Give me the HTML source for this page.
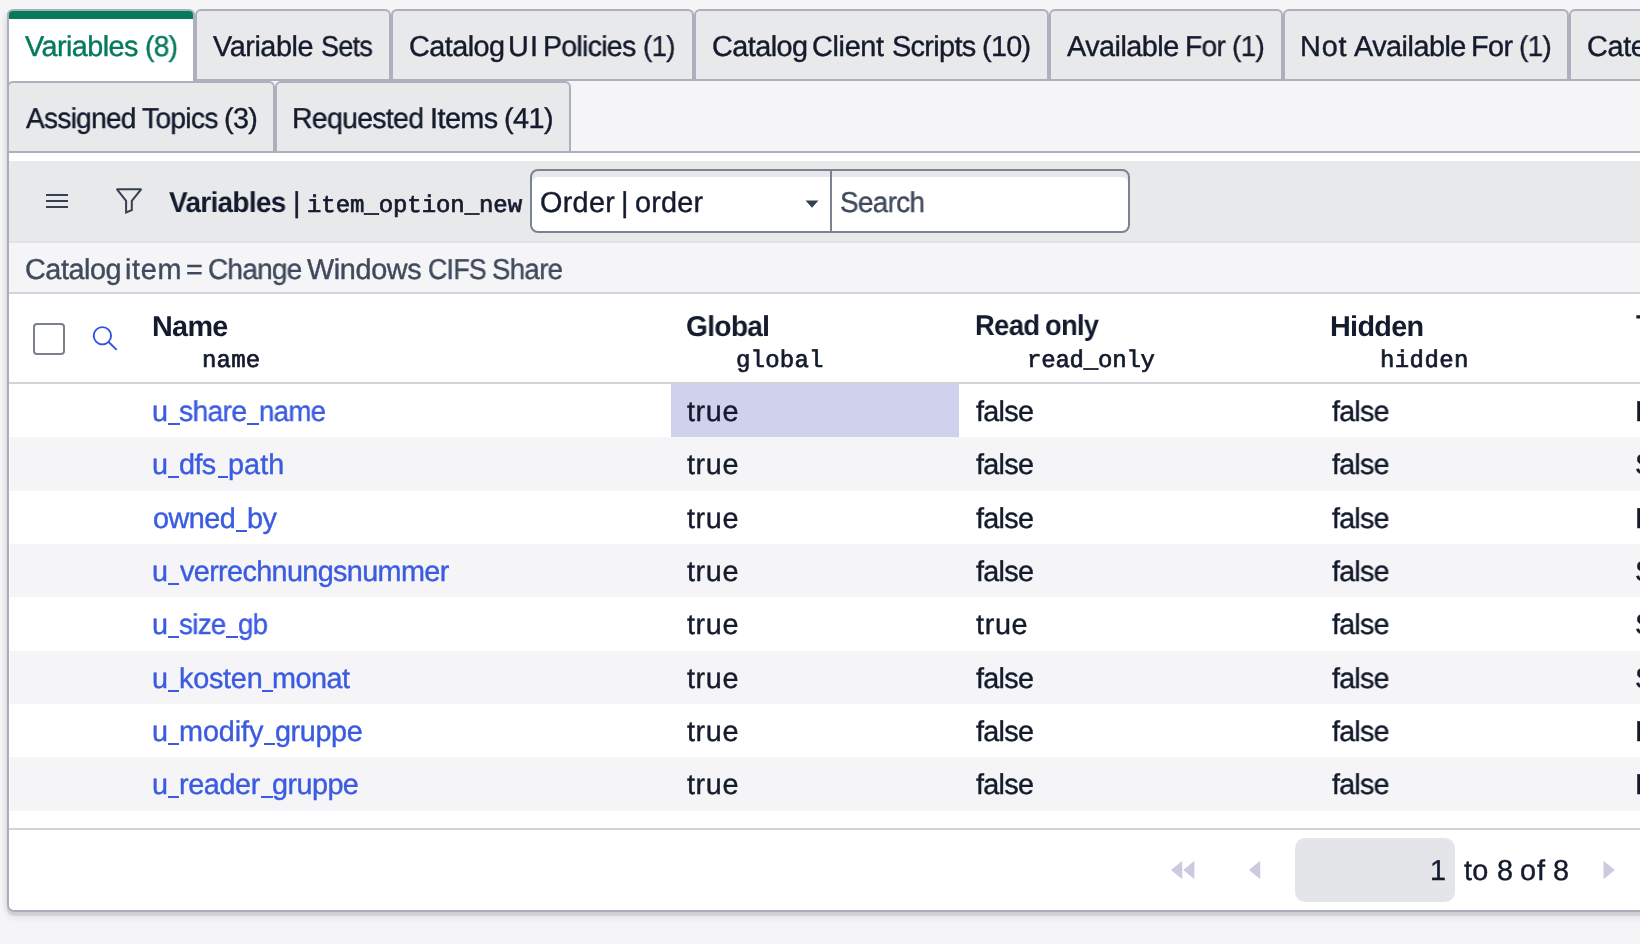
<!DOCTYPE html>
<html><head><meta charset="utf-8"><title>Variables</title>
<style>
html,body{margin:0;padding:0}
body{width:1640px;height:944px;overflow:hidden;position:relative;background:#f5f5f7;font-family:"Liberation Sans",sans-serif}
.t{position:absolute;white-space:nowrap;display:block;will-change:transform;transform-origin:0 0;text-rendering:geometricPrecision}
.abs,.tab,.alt{position:absolute;box-sizing:border-box}
.tab{height:72px;border:2px solid #acb0bd;border-radius:6px 6px 0 0;background:#e8e9eb}
.tab.act{background:linear-gradient(#067a5b 8px,#fff 8px);border-bottom:0}
.alt{left:10px;width:1640px;background:#f5f5f7}
</style></head><body>
<!-- outer frame with shadow -->
<div class="abs" style="left:7px;top:13px;width:1700px;height:899px;border-left:2px solid #a9adb9;border-bottom:2px solid #a9adb9;border-bottom-left-radius:7px;box-shadow:0 4px 0 rgba(40,45,70,.085),0 5px 7px rgba(40,45,70,.10),-2px 0 5px rgba(30,32,45,.065)"></div>
<!-- list white background -->
<div class="abs" style="left:9px;top:153px;width:1640px;height:757px;background:#fff;border-bottom-left-radius:5px"></div>
<!-- tab strip lines -->
<div class="abs" style="left:9px;top:79px;width:1640px;height:2px;background:#acb0bd"></div>
<div class="tab act" style="left:7px;top:9px;width:188px"></div><div class="tab" style="left:195px;top:9px;width:196px"></div><div class="tab" style="left:391px;top:9px;width:303px"></div><div class="tab" style="left:694px;top:9px;width:355px"></div><div class="tab" style="left:1049px;top:9px;width:234px"></div><div class="tab" style="left:1283px;top:9px;width:286px"></div><div class="tab" style="left:1569px;top:9px;width:231px"></div><div class="tab" style="left:7px;top:81px;width:268px"></div><div class="tab" style="left:275px;top:81px;width:296px"></div>
<div class="abs" style="left:9px;top:151px;width:1640px;height:2px;background:#acb0bd"></div>
<!-- toolbar -->
<div class="abs" style="left:9px;top:161px;width:1640px;height:82px;background:#e8e9eb"></div>
<div class="abs" style="left:46px;top:194px;width:22px;height:2px;background:#364052"></div><div class="abs" style="left:46px;top:200px;width:22px;height:2px;background:#364052"></div><div class="abs" style="left:46px;top:206px;width:22px;height:2px;background:#364052"></div>
<svg class="abs" style="left:110px;top:182px" width="40" height="40" viewBox="110 182 40 40"><path d="M116.8 189.15H141.3L131.8 200.9V210.1L126.1 212.5V200.9Z" stroke="#364052" stroke-width="2" fill="none" stroke-linejoin="miter" stroke-miterlimit="2"/></svg>
<!-- select + search -->
<div class="abs" style="left:530px;top:169px;width:302px;height:64px;border:2px solid #7b8290;border-radius:8px 0 0 8px;background:#fff;box-shadow:inset 0 6px 0 #e6e7ea"></div>
<div class="abs" style="left:830px;top:169px;width:300px;height:64px;border:2px solid #7b8290;border-radius:0 8px 8px 0;background:#fff;box-shadow:inset 0 6px 0 #e6e7ea"></div>
<svg class="abs" style="left:805px;top:200px" width="14" height="8" viewBox="0 0 14 8"><path d="M0.5 0.5H13.5L7 7.8Z" fill="#364052"/></svg>
<!-- breadcrumb -->
<div class="abs" style="left:9px;top:241px;width:1640px;height:2px;background:#e2e3e6"></div>
<div class="abs" style="left:9px;top:243px;width:1640px;height:49px;background:#f5f5f7"></div>
<div class="abs" style="left:9px;top:292px;width:1640px;height:2px;background:#d2d3da"></div>
<!-- header -->
<div class="abs" style="left:33px;top:323px;width:32px;height:32px;border:2px solid #7a808d;border-radius:4px;background:#fff"></div>
<svg class="abs" style="left:88px;top:322px" width="34" height="34" viewBox="88 322 34 34"><g stroke="#3352e4" stroke-width="1.9" fill="none"><circle cx="102.4" cy="335.75" r="8.65"/><path d="M108.6 342L116.7 349.9"/></g></svg>
<div class="abs" style="left:9px;top:382px;width:1640px;height:2px;background:#d2d3da"></div>
<!-- rows -->
<div class="alt" style="top:437px;height:54px"></div><div class="alt" style="top:544px;height:53px"></div><div class="alt" style="top:651px;height:53px"></div><div class="alt" style="top:757px;height:54px"></div>
<div class="abs" style="left:671px;top:384px;width:288px;height:53px;background:#d0d1ec"></div>
<!-- footer -->
<div class="abs" style="left:9px;top:828px;width:1640px;height:2px;background:#d2d3da"></div>
<div class="abs" style="left:1295px;top:838px;width:160px;height:64px;border-radius:10px;background:#e4e5e8"></div>
<svg class="abs" style="left:1168px;top:858px" width="30" height="24" viewBox="1168 858 30 24"><path d="M1182.3 860.7V879.2L1171 869.95ZM1194.4 860.7V879.2L1183.3 869.95Z" fill="#cbcbdf"/></svg>
<svg class="abs" style="left:1246px;top:858px" width="18" height="24" viewBox="1246 858 18 24"><path d="M1260.2 860.7V879.2L1248.9 869.95Z" fill="#cbcbdf"/></svg>
<svg class="abs" style="left:1600px;top:858px" width="18" height="24" viewBox="1600 858 18 24"><path d="M1603.5 860.7V879.2L1614.8 869.95Z" fill="#cbcbdf"/></svg>
<!-- texts -->
<span class="t" style="left:25.1px;top:33.0px;font:400 28.8px/1 'Liberation Sans',sans-serif;letter-spacing:-0.575px;-webkit-text-stroke:0.4px;color:#067a5b">Variables</span>
<span class="t" style="left:144.9px;top:33.0px;transform:scaleX(0.9742);font:400 28.8px/1 'Liberation Sans',sans-serif;letter-spacing:-0.700px;-webkit-text-stroke:0.4px;color:#067a5b">(8)</span>
<span class="t" style="left:213.4px;top:33.0px;font:400 28.8px/1 'Liberation Sans',sans-serif;letter-spacing:-0.429px;-webkit-text-stroke:0.4px;color:#141b2d">Variable</span>
<span class="t" style="left:320.6px;top:33.0px;transform:scaleX(0.9352);font:400 28.8px/1 'Liberation Sans',sans-serif;letter-spacing:-0.700px;-webkit-text-stroke:0.4px;color:#141b2d">Sets</span>
<span class="t" style="left:408.5px;top:33.0px;font:400 28.8px/1 'Liberation Sans',sans-serif;letter-spacing:-0.533px;-webkit-text-stroke:0.4px;color:#141b2d">Catalog</span>
<span class="t" style="left:508.2px;top:33.0px;font:400 28.8px/1 'Liberation Sans',sans-serif;letter-spacing:1.200px;-webkit-text-stroke:0.4px;color:#141b2d">UI</span>
<span class="t" style="left:543.4px;top:33.0px;transform:scaleX(0.9880);font:400 28.8px/1 'Liberation Sans',sans-serif;letter-spacing:-0.700px;-webkit-text-stroke:0.4px;color:#141b2d">Policies</span>
<span class="t" style="left:643.4px;top:33.0px;transform:scaleX(0.9581);font:400 28.8px/1 'Liberation Sans',sans-serif;letter-spacing:-0.700px;-webkit-text-stroke:0.4px;color:#141b2d">(1)</span>
<span class="t" style="left:711.7px;top:33.0px;font:400 28.8px/1 'Liberation Sans',sans-serif;letter-spacing:-0.533px;-webkit-text-stroke:0.4px;color:#141b2d">Catalog</span>
<span class="t" style="left:812.4px;top:33.0px;font:400 28.8px/1 'Liberation Sans',sans-serif;letter-spacing:-0.320px;-webkit-text-stroke:0.4px;color:#141b2d">Client</span>
<span class="t" style="left:891.7px;top:33.0px;transform:scaleX(1.0049);font:400 28.8px/1 'Liberation Sans',sans-serif;letter-spacing:-0.700px;-webkit-text-stroke:0.4px;color:#141b2d">Scripts</span>
<span class="t" style="left:981.9px;top:33.0px;transform:scaleX(0.9979);font:400 28.8px/1 'Liberation Sans',sans-serif;letter-spacing:-0.700px;-webkit-text-stroke:0.4px;color:#141b2d">(10)</span>
<span class="t" style="left:1067.1px;top:33.0px;font:400 28.8px/1 'Liberation Sans',sans-serif;letter-spacing:-0.525px;-webkit-text-stroke:0.4px;color:#141b2d">Available</span>
<span class="t" style="left:1184.6px;top:33.0px;transform:scaleX(0.9750);font:400 28.8px/1 'Liberation Sans',sans-serif;letter-spacing:-0.700px;-webkit-text-stroke:0.4px;color:#141b2d">For</span>
<span class="t" style="left:1232.4px;top:33.0px;transform:scaleX(0.9677);font:400 28.8px/1 'Liberation Sans',sans-serif;letter-spacing:-0.700px;-webkit-text-stroke:0.4px;color:#141b2d">(1)</span>
<span class="t" style="left:1300.2px;top:33.0px;font:400 28.8px/1 'Liberation Sans',sans-serif;letter-spacing:0.900px;-webkit-text-stroke:0.4px;color:#141b2d">Not</span>
<span class="t" style="left:1354.0px;top:33.0px;font:400 28.8px/1 'Liberation Sans',sans-serif;letter-spacing:-0.500px;-webkit-text-stroke:0.4px;color:#141b2d">Available</span>
<span class="t" style="left:1470.5px;top:33.0px;font:400 28.8px/1 'Liberation Sans',sans-serif;letter-spacing:-0.500px;-webkit-text-stroke:0.4px;color:#141b2d">For</span>
<span class="t" style="left:1519.0px;top:33.0px;transform:scaleX(0.9645);font:400 28.8px/1 'Liberation Sans',sans-serif;letter-spacing:-0.700px;-webkit-text-stroke:0.4px;color:#141b2d">(1)</span>
<span class="t" style="left:1587.3px;top:33.0px;font:400 28.8px/1 'Liberation Sans',sans-serif;letter-spacing:-0.333px;-webkit-text-stroke:0.4px;color:#141b2d">Categories</span>
<span class="t" style="left:25.5px;top:105.0px;transform:scaleX(0.9723);font:400 28.8px/1 'Liberation Sans',sans-serif;letter-spacing:-0.700px;-webkit-text-stroke:0.4px;color:#141b2d">Assigned</span>
<span class="t" style="left:141.5px;top:105.0px;transform:scaleX(0.9779);font:400 28.8px/1 'Liberation Sans',sans-serif;letter-spacing:-0.700px;-webkit-text-stroke:0.4px;color:#141b2d">Topics</span>
<span class="t" style="left:223.6px;top:105.0px;transform:scaleX(0.9903);font:400 28.8px/1 'Liberation Sans',sans-serif;letter-spacing:-0.700px;-webkit-text-stroke:0.4px;color:#141b2d">(3)</span>
<span class="t" style="left:292.2px;top:105.0px;transform:scaleX(0.9877);font:400 28.8px/1 'Liberation Sans',sans-serif;letter-spacing:-0.700px;-webkit-text-stroke:0.4px;color:#141b2d">Requested</span>
<span class="t" style="left:429.5px;top:105.0px;font:400 28.8px/1 'Liberation Sans',sans-serif;letter-spacing:-0.550px;-webkit-text-stroke:0.4px;color:#141b2d">Items</span>
<span class="t" style="left:504.0px;top:105.0px;font:400 28.8px/1 'Liberation Sans',sans-serif;letter-spacing:-0.533px;-webkit-text-stroke:0.4px;color:#141b2d">(41)</span>
<span class="t" style="left:169.1px;top:188.6px;transform:scaleX(0.9708);font:700 28.8px/1 'Liberation Sans',sans-serif;letter-spacing:-0.700px;color:#141b2d">Variables</span>
<span class="t" style="left:292.5px;top:188.6px;font:400 28.8px/1 'Liberation Sans',sans-serif;letter-spacing:0.000px;-webkit-text-stroke:0.4px;color:#141b2d">|</span>
<span class="t" style="left:307.0px;top:194.6px;font:400 24px/1 'Liberation Mono',monospace;letter-spacing:-0.071px;-webkit-text-stroke:0.7px;color:#141b2d">item_option_new</span>
<span class="t" style="left:539.7px;top:188.8px;font:400 28.8px/1 'Liberation Sans',sans-serif;letter-spacing:0.300px;-webkit-text-stroke:0.4px;color:#141b2d">Order</span>
<span class="t" style="left:621.2px;top:188.8px;font:400 28.8px/1 'Liberation Sans',sans-serif;letter-spacing:0.000px;-webkit-text-stroke:0.4px;color:#141b2d">|</span>
<span class="t" style="left:634.5px;top:188.8px;font:400 28.8px/1 'Liberation Sans',sans-serif;letter-spacing:0.200px;-webkit-text-stroke:0.4px;color:#141b2d">order</span>
<span class="t" style="left:839.7px;top:189.0px;transform:scaleX(0.9682);font:400 28.8px/1 'Liberation Sans',sans-serif;letter-spacing:-0.700px;-webkit-text-stroke:0.4px;color:#3f4a5c">Search</span>
<span class="t" style="left:25.1px;top:255.8px;font:400 28.8px/1 'Liberation Sans',sans-serif;letter-spacing:-0.467px;-webkit-text-stroke:0.4px;color:#3f4a5c">Catalog</span>
<span class="t" style="left:125.1px;top:255.8px;font:400 28.8px/1 'Liberation Sans',sans-serif;letter-spacing:0.667px;-webkit-text-stroke:0.4px;color:#3f4a5c">item</span>
<span class="t" style="left:186.4px;top:255.8px;font:400 28.8px/1 'Liberation Sans',sans-serif;letter-spacing:0.000px;-webkit-text-stroke:0.4px;color:#3f4a5c">=</span>
<span class="t" style="left:207.8px;top:255.8px;transform:scaleX(0.9684);font:400 28.8px/1 'Liberation Sans',sans-serif;letter-spacing:-0.700px;-webkit-text-stroke:0.4px;color:#3f4a5c">Change</span>
<span class="t" style="left:307.4px;top:255.8px;font:400 28.8px/1 'Liberation Sans',sans-serif;letter-spacing:-0.367px;-webkit-text-stroke:0.4px;color:#3f4a5c">Windows</span>
<span class="t" style="left:428.1px;top:255.8px;transform:scaleX(0.9246);font:400 28.8px/1 'Liberation Sans',sans-serif;letter-spacing:-0.700px;-webkit-text-stroke:0.4px;color:#3f4a5c">CIFS</span>
<span class="t" style="left:492.0px;top:255.8px;transform:scaleX(0.9583);font:400 28.8px/1 'Liberation Sans',sans-serif;letter-spacing:-0.700px;-webkit-text-stroke:0.4px;color:#3f4a5c">Share</span>
<span class="t" style="left:152.4px;top:312.6px;transform:scaleX(0.9945);font:700 28.8px/1 'Liberation Sans',sans-serif;letter-spacing:-0.700px;color:#141b2d">Name</span>
<span class="t" style="left:202.2px;top:349.9px;font:400 24px/1 'Liberation Mono',monospace;letter-spacing:0.200px;-webkit-text-stroke:0.7px;color:#141b2d">name</span>
<span class="t" style="left:686.0px;top:312.6px;transform:scaleX(0.9759);font:700 28.8px/1 'Liberation Sans',sans-serif;letter-spacing:-0.700px;color:#141b2d">Global</span>
<span class="t" style="left:736.0px;top:349.9px;font:400 24px/1 'Liberation Mono',monospace;letter-spacing:0.200px;-webkit-text-stroke:0.7px;color:#141b2d">global</span>
<span class="t" style="left:1330.0px;top:312.6px;font:700 28.8px/1 'Liberation Sans',sans-serif;letter-spacing:-0.700px;color:#141b2d">Hidden</span>
<span class="t" style="left:1380.0px;top:349.9px;font:400 24px/1 'Liberation Mono',monospace;letter-spacing:0.400px;-webkit-text-stroke:0.7px;color:#141b2d">hidden</span>
<span class="t" style="left:974.9px;top:312.4px;transform:scaleX(0.9516);font:700 28.8px/1 'Liberation Sans',sans-serif;letter-spacing:-0.700px;color:#141b2d">Read</span>
<span class="t" style="left:1044.7px;top:312.4px;transform:scaleX(0.9464);font:700 28.8px/1 'Liberation Sans',sans-serif;letter-spacing:-0.700px;color:#141b2d">only</span>
<span class="t" style="left:1026.6px;top:349.5px;font:400 24px/1 'Liberation Mono',monospace;letter-spacing:-0.200px;-webkit-text-stroke:0.7px;color:#141b2d">read_only</span>
<span class="t" style="left:1636.0px;top:312.4px;transform:scaleX(0.9355);font:700 28.8px/1 'Liberation Sans',sans-serif;letter-spacing:-0.700px;color:#141b2d">Type</span>
<span class="t" style="left:151.9px;top:398.0px;font:400 28.8px/1 'Liberation Sans',sans-serif;letter-spacing:0.000px;-webkit-text-stroke:0.4px;color:#3b5be0">u</span>
<span class="t" style="left:179.2px;top:398.0px;transform:scaleX(0.9836);font:400 28.8px/1 'Liberation Sans',sans-serif;letter-spacing:-0.700px;-webkit-text-stroke:0.4px;color:#3b5be0">share</span>
<span class="t" style="left:258.8px;top:398.0px;transform:scaleX(0.9567);font:400 28.8px/1 'Liberation Sans',sans-serif;letter-spacing:-0.700px;-webkit-text-stroke:0.4px;color:#3b5be0">name</span>
<span class="t" style="left:687.2px;top:398.0px;font:400 28.8px/1 'Liberation Sans',sans-serif;letter-spacing:0.600px;-webkit-text-stroke:0.4px;color:#141b2d">true</span>
<span class="t" style="left:976.0px;top:398.0px;font:400 28.8px/1 'Liberation Sans',sans-serif;letter-spacing:-0.700px;-webkit-text-stroke:0.4px;color:#141b2d">false</span>
<span class="t" style="left:1332.0px;top:398.0px;transform:scaleX(0.9912);font:400 28.8px/1 'Liberation Sans',sans-serif;letter-spacing:-0.700px;-webkit-text-stroke:0.4px;color:#141b2d">false</span>
<span class="t" style="left:1635.0px;top:398.0px;font:400 28.8px/1 'Liberation Sans',sans-serif;letter-spacing:-0.800px;-webkit-text-stroke:0.4px;color:#141b2d">Reference</span>
<span class="t" style="left:151.9px;top:451.3px;font:400 28.8px/1 'Liberation Sans',sans-serif;letter-spacing:0.000px;-webkit-text-stroke:0.4px;color:#3b5be0">u</span>
<span class="t" style="left:179.2px;top:451.3px;font:400 28.8px/1 'Liberation Sans',sans-serif;letter-spacing:-0.600px;-webkit-text-stroke:0.4px;color:#3b5be0">dfs</span>
<span class="t" style="left:227.9px;top:451.3px;font:400 28.8px/1 'Liberation Sans',sans-serif;letter-spacing:0.067px;-webkit-text-stroke:0.4px;color:#3b5be0">path</span>
<span class="t" style="left:687.2px;top:451.3px;font:400 28.8px/1 'Liberation Sans',sans-serif;letter-spacing:0.600px;-webkit-text-stroke:0.4px;color:#141b2d">true</span>
<span class="t" style="left:976.0px;top:451.3px;font:400 28.8px/1 'Liberation Sans',sans-serif;letter-spacing:-0.700px;-webkit-text-stroke:0.4px;color:#141b2d">false</span>
<span class="t" style="left:1332.0px;top:451.3px;transform:scaleX(0.9912);font:400 28.8px/1 'Liberation Sans',sans-serif;letter-spacing:-0.700px;-webkit-text-stroke:0.4px;color:#141b2d">false</span>
<span class="t" style="left:1634.5px;top:451.3px;font:400 28.8px/1 'Liberation Sans',sans-serif;letter-spacing:-0.800px;-webkit-text-stroke:0.4px;color:#141b2d">Single Line Text</span>
<span class="t" style="left:152.7px;top:504.7px;font:400 28.8px/1 'Liberation Sans',sans-serif;letter-spacing:-0.500px;-webkit-text-stroke:0.4px;color:#3b5be0">owned</span>
<span class="t" style="left:246.7px;top:504.7px;font:400 28.8px/1 'Liberation Sans',sans-serif;letter-spacing:-0.600px;-webkit-text-stroke:0.4px;color:#3b5be0">by</span>
<span class="t" style="left:687.2px;top:504.7px;font:400 28.8px/1 'Liberation Sans',sans-serif;letter-spacing:0.600px;-webkit-text-stroke:0.4px;color:#141b2d">true</span>
<span class="t" style="left:976.0px;top:504.7px;font:400 28.8px/1 'Liberation Sans',sans-serif;letter-spacing:-0.700px;-webkit-text-stroke:0.4px;color:#141b2d">false</span>
<span class="t" style="left:1332.0px;top:504.7px;transform:scaleX(0.9912);font:400 28.8px/1 'Liberation Sans',sans-serif;letter-spacing:-0.700px;-webkit-text-stroke:0.4px;color:#141b2d">false</span>
<span class="t" style="left:1635.0px;top:504.7px;font:400 28.8px/1 'Liberation Sans',sans-serif;letter-spacing:-0.800px;-webkit-text-stroke:0.4px;color:#141b2d">Reference</span>
<span class="t" style="left:151.9px;top:558.0px;font:400 28.8px/1 'Liberation Sans',sans-serif;letter-spacing:0.000px;-webkit-text-stroke:0.4px;color:#3b5be0">u</span>
<span class="t" style="left:180.2px;top:558.0px;font:400 28.8px/1 'Liberation Sans',sans-serif;letter-spacing:-0.635px;-webkit-text-stroke:0.4px;color:#3b5be0">verrechnungsnummer</span>
<span class="t" style="left:687.2px;top:558.0px;font:400 28.8px/1 'Liberation Sans',sans-serif;letter-spacing:0.600px;-webkit-text-stroke:0.4px;color:#141b2d">true</span>
<span class="t" style="left:976.0px;top:558.0px;font:400 28.8px/1 'Liberation Sans',sans-serif;letter-spacing:-0.700px;-webkit-text-stroke:0.4px;color:#141b2d">false</span>
<span class="t" style="left:1332.0px;top:558.0px;transform:scaleX(0.9912);font:400 28.8px/1 'Liberation Sans',sans-serif;letter-spacing:-0.700px;-webkit-text-stroke:0.4px;color:#141b2d">false</span>
<span class="t" style="left:1634.5px;top:558.0px;font:400 28.8px/1 'Liberation Sans',sans-serif;letter-spacing:-0.800px;-webkit-text-stroke:0.4px;color:#141b2d">Single Line Text</span>
<span class="t" style="left:151.9px;top:611.3px;font:400 28.8px/1 'Liberation Sans',sans-serif;letter-spacing:0.000px;-webkit-text-stroke:0.4px;color:#3b5be0">u</span>
<span class="t" style="left:179.2px;top:611.3px;transform:scaleX(0.9638);font:400 28.8px/1 'Liberation Sans',sans-serif;letter-spacing:-0.700px;-webkit-text-stroke:0.4px;color:#3b5be0">size</span>
<span class="t" style="left:238.0px;top:611.3px;transform:scaleX(0.9586);font:400 28.8px/1 'Liberation Sans',sans-serif;letter-spacing:-0.700px;-webkit-text-stroke:0.4px;color:#3b5be0">gb</span>
<span class="t" style="left:687.2px;top:611.3px;font:400 28.8px/1 'Liberation Sans',sans-serif;letter-spacing:0.600px;-webkit-text-stroke:0.4px;color:#141b2d">true</span>
<span class="t" style="left:976.0px;top:611.3px;font:400 28.8px/1 'Liberation Sans',sans-serif;letter-spacing:0.667px;-webkit-text-stroke:0.4px;color:#141b2d">true</span>
<span class="t" style="left:1332.0px;top:611.3px;transform:scaleX(0.9912);font:400 28.8px/1 'Liberation Sans',sans-serif;letter-spacing:-0.700px;-webkit-text-stroke:0.4px;color:#141b2d">false</span>
<span class="t" style="left:1634.5px;top:611.3px;font:400 28.8px/1 'Liberation Sans',sans-serif;letter-spacing:-0.800px;-webkit-text-stroke:0.4px;color:#141b2d">Single Line Text</span>
<span class="t" style="left:151.9px;top:664.7px;font:400 28.8px/1 'Liberation Sans',sans-serif;letter-spacing:0.000px;-webkit-text-stroke:0.4px;color:#3b5be0">u</span>
<span class="t" style="left:178.8px;top:664.7px;font:400 28.8px/1 'Liberation Sans',sans-serif;letter-spacing:-0.240px;-webkit-text-stroke:0.4px;color:#3b5be0">kosten</span>
<span class="t" style="left:272.4px;top:664.7px;font:400 28.8px/1 'Liberation Sans',sans-serif;letter-spacing:-0.500px;-webkit-text-stroke:0.4px;color:#3b5be0">monat</span>
<span class="t" style="left:687.2px;top:664.7px;font:400 28.8px/1 'Liberation Sans',sans-serif;letter-spacing:0.600px;-webkit-text-stroke:0.4px;color:#141b2d">true</span>
<span class="t" style="left:976.0px;top:664.7px;font:400 28.8px/1 'Liberation Sans',sans-serif;letter-spacing:-0.700px;-webkit-text-stroke:0.4px;color:#141b2d">false</span>
<span class="t" style="left:1332.0px;top:664.7px;transform:scaleX(0.9912);font:400 28.8px/1 'Liberation Sans',sans-serif;letter-spacing:-0.700px;-webkit-text-stroke:0.4px;color:#141b2d">false</span>
<span class="t" style="left:1634.5px;top:664.7px;font:400 28.8px/1 'Liberation Sans',sans-serif;letter-spacing:-0.800px;-webkit-text-stroke:0.4px;color:#141b2d">Single Line Text</span>
<span class="t" style="left:151.9px;top:718.0px;font:400 28.8px/1 'Liberation Sans',sans-serif;letter-spacing:0.000px;-webkit-text-stroke:0.4px;color:#3b5be0">u</span>
<span class="t" style="left:178.8px;top:718.0px;font:400 28.8px/1 'Liberation Sans',sans-serif;letter-spacing:-0.080px;-webkit-text-stroke:0.4px;color:#3b5be0">modify</span>
<span class="t" style="left:274.8px;top:718.0px;font:400 28.8px/1 'Liberation Sans',sans-serif;letter-spacing:-0.400px;-webkit-text-stroke:0.4px;color:#3b5be0">gruppe</span>
<span class="t" style="left:687.2px;top:718.0px;font:400 28.8px/1 'Liberation Sans',sans-serif;letter-spacing:0.600px;-webkit-text-stroke:0.4px;color:#141b2d">true</span>
<span class="t" style="left:976.0px;top:718.0px;font:400 28.8px/1 'Liberation Sans',sans-serif;letter-spacing:-0.700px;-webkit-text-stroke:0.4px;color:#141b2d">false</span>
<span class="t" style="left:1332.0px;top:718.0px;transform:scaleX(0.9912);font:400 28.8px/1 'Liberation Sans',sans-serif;letter-spacing:-0.700px;-webkit-text-stroke:0.4px;color:#141b2d">false</span>
<span class="t" style="left:1635.0px;top:718.0px;font:400 28.8px/1 'Liberation Sans',sans-serif;letter-spacing:-0.800px;-webkit-text-stroke:0.4px;color:#141b2d">Reference</span>
<span class="t" style="left:151.9px;top:771.3px;font:400 28.8px/1 'Liberation Sans',sans-serif;letter-spacing:0.000px;-webkit-text-stroke:0.4px;color:#3b5be0">u</span>
<span class="t" style="left:178.8px;top:771.3px;font:400 28.8px/1 'Liberation Sans',sans-serif;letter-spacing:-0.400px;-webkit-text-stroke:0.4px;color:#3b5be0">reader</span>
<span class="t" style="left:272.2px;top:771.3px;font:400 28.8px/1 'Liberation Sans',sans-serif;letter-spacing:-0.560px;-webkit-text-stroke:0.4px;color:#3b5be0">gruppe</span>
<span class="t" style="left:687.2px;top:771.3px;font:400 28.8px/1 'Liberation Sans',sans-serif;letter-spacing:0.600px;-webkit-text-stroke:0.4px;color:#141b2d">true</span>
<span class="t" style="left:976.0px;top:771.3px;font:400 28.8px/1 'Liberation Sans',sans-serif;letter-spacing:-0.700px;-webkit-text-stroke:0.4px;color:#141b2d">false</span>
<span class="t" style="left:1332.0px;top:771.3px;transform:scaleX(0.9912);font:400 28.8px/1 'Liberation Sans',sans-serif;letter-spacing:-0.700px;-webkit-text-stroke:0.4px;color:#141b2d">false</span>
<span class="t" style="left:1635.0px;top:771.3px;font:400 28.8px/1 'Liberation Sans',sans-serif;letter-spacing:-0.800px;-webkit-text-stroke:0.4px;color:#141b2d">Reference</span>
<span class="t" style="left:1429.6px;top:857.3px;font:400 28.8px/1 'Liberation Sans',sans-serif;letter-spacing:0.000px;-webkit-text-stroke:0.4px;color:#141b2d">1</span>
<span class="t" style="left:1464.1px;top:857.3px;font:400 28.8px/1 'Liberation Sans',sans-serif;letter-spacing:0.200px;-webkit-text-stroke:0.4px;color:#141b2d">to</span>
<span class="t" style="left:1497.0px;top:857.3px;font:400 28.8px/1 'Liberation Sans',sans-serif;letter-spacing:0.000px;-webkit-text-stroke:0.4px;color:#141b2d">8</span>
<span class="t" style="left:1520.0px;top:857.3px;font:400 28.8px/1 'Liberation Sans',sans-serif;letter-spacing:1.000px;-webkit-text-stroke:0.4px;color:#141b2d">of</span>
<span class="t" style="left:1552.9px;top:857.3px;font:400 28.8px/1 'Liberation Sans',sans-serif;letter-spacing:0.000px;-webkit-text-stroke:0.4px;color:#141b2d">8</span>
<i class="abs" style="left:168px;top:423px;width:12px;height:2px;background:#3b5be0"></i>
<i class="abs" style="left:247px;top:423px;width:12px;height:2px;background:#3b5be0"></i>
<i class="abs" style="left:168px;top:476px;width:11px;height:2px;background:#3b5be0"></i>
<i class="abs" style="left:218px;top:476px;width:10px;height:2px;background:#3b5be0"></i>
<i class="abs" style="left:236px;top:530px;width:11px;height:2px;background:#3b5be0"></i>
<i class="abs" style="left:168px;top:583px;width:11px;height:2px;background:#3b5be0"></i>
<i class="abs" style="left:168px;top:636px;width:11px;height:2px;background:#3b5be0"></i>
<i class="abs" style="left:226px;top:636px;width:12px;height:2px;background:#3b5be0"></i>
<i class="abs" style="left:168px;top:690px;width:11px;height:2px;background:#3b5be0"></i>
<i class="abs" style="left:262px;top:690px;width:11px;height:2px;background:#3b5be0"></i>
<i class="abs" style="left:168px;top:743px;width:11px;height:2px;background:#3b5be0"></i>
<i class="abs" style="left:264px;top:743px;width:11px;height:2px;background:#3b5be0"></i>
<i class="abs" style="left:168px;top:796px;width:11px;height:2px;background:#3b5be0"></i>
<i class="abs" style="left:261px;top:796px;width:12px;height:2px;background:#3b5be0"></i>
</body></html>
